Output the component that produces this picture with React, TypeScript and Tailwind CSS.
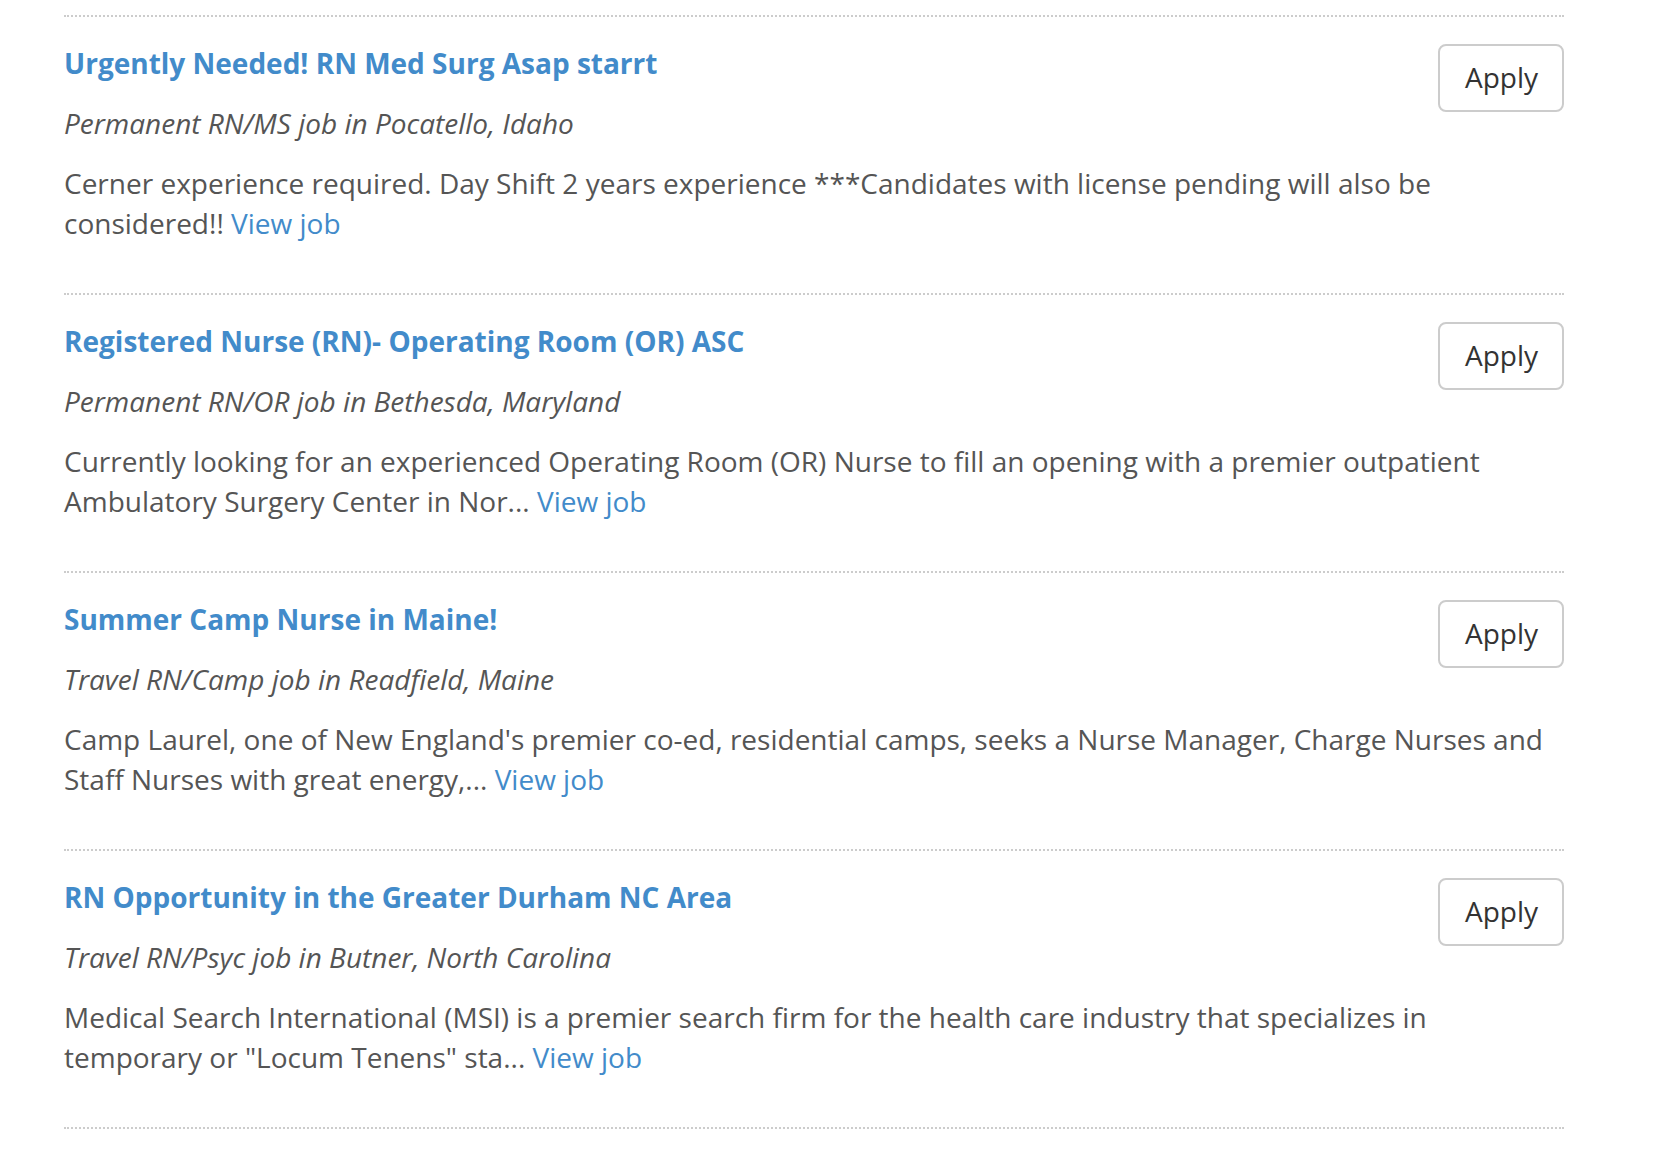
import React from "react";

interface Job {
  id: number;
  title: string;
  meta: string;
  summary: string;
}

const jobs: Job[] = [
  {
    id: 1,
    title: "Urgently Needed! RN Med Surg Asap starrt",
    meta: "Permanent RN/MS job in Pocatello, Idaho",
    summary:
      "Cerner experience required. Day Shift 2 years experience ***Candidates with license pending will also be considered!!",
  },
  {
    id: 2,
    title: "Registered Nurse (RN)- Operating Room (OR) ASC",
    meta: "Permanent RN/OR job in Bethesda, Maryland",
    summary:
      "Currently looking for an experienced Operating Room (OR) Nurse to fill an opening with a premier outpatient Ambulatory Surgery Center in Nor...",
  },
  {
    id: 3,
    title: "Summer Camp Nurse in Maine!",
    meta: "Travel RN/Camp job in Readfield, Maine",
    summary:
      "Camp Laurel, one of New England's premier co-ed, residential camps, seeks a Nurse Manager, Charge Nurses and Staff Nurses with great energy,...",
  },
  {
    id: 4,
    title: "RN Opportunity in the Greater Durham NC Area",
    meta: "Travel RN/Psyc job in Butner, North Carolina",
    summary:
      'Medical Search International (MSI) is a premier search firm for the health care industry that specializes in temporary or "Locum Tenens" sta...',
  },
];

export default function App() {
  return (
    <div className="min-h-screen bg-white font-['Open_Sans',sans-serif] text-[28px] leading-[40px] text-[#555]">
      <div className="ml-[64px] w-[1500px] pt-[15px]">
        {jobs.map((job) => (
          <div
            key={job.id}
            className="border-t-2 border-dotted border-[#ccc] pt-[26px] pb-[50px]"
          >
            {/* Title, meta and apply button */}
            <div className="flex items-start justify-between">
              <div>
                <h3 className="mb-[20px] font-bold text-[#428bca]">
                  <a href="#">{job.title}</a>
                </h3>
                <p className="mb-[20px] italic">{job.meta}</p>
              </div>
              <button className="mt-px rounded-[8px] border-2 border-[#ccc] bg-white pt-[11px] pb-[13px] pl-[25px] pr-[24px] text-[#333]">
                Apply
              </button>
            </div>

            {/* Summary */}
            <p>
              {job.summary}{" "}
              <a href="#" className="text-[#428bca]">
                View job
              </a>
            </p>
          </div>
        ))}
        <div className="border-t-2 border-dotted border-[#ccc]" />
      </div>
    </div>
  );
}
